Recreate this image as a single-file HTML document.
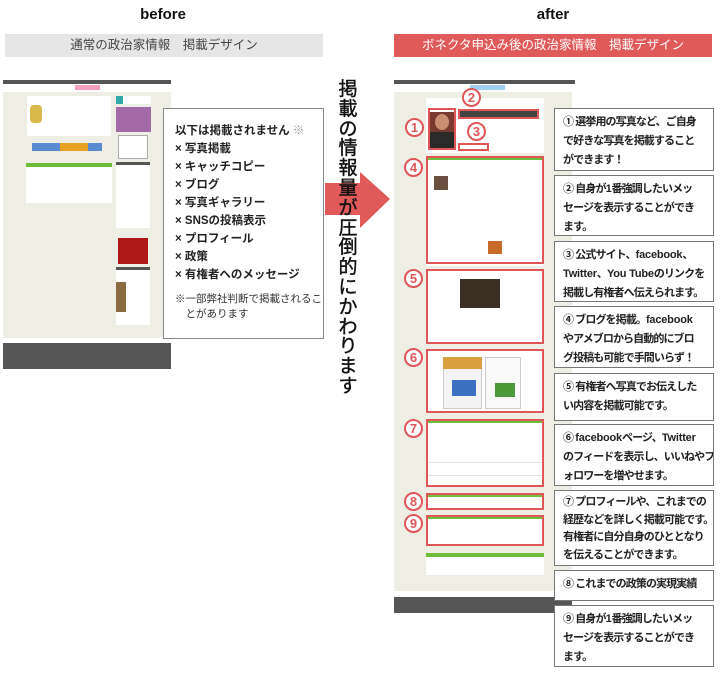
<!DOCTYPE html>
<html><head><meta charset="utf-8"><style>
*{margin:0;padding:0;box-sizing:border-box}
body{width:720px;height:673px;background:#fff;position:relative;overflow:hidden;font-family:"Liberation Sans","Noto Sans CJK JP",sans-serif;color:#222}
.a{position:absolute}
.hd{font-weight:bold;font-size:15px;text-align:center;color:#111}
.bar{height:23px;font-size:12.5px;line-height:23px;text-align:center}
.box{position:absolute;border:1.5px solid #777;background:#fff;font-size:11px;font-weight:bold;line-height:19px;padding:4px 0 0 8px;color:#222;white-space:nowrap;letter-spacing:-0.9px;overflow:hidden}
.box i{font-style:normal;letter-spacing:-0.2px}
.rb{position:absolute;border:2px solid #e05656}
.cn{position:absolute;width:19px;height:19px;border:2px solid #e05656;border-radius:50%;color:#e05656;font-size:13px;font-weight:bold;line-height:15px;text-align:center;background:#fff}
.g{position:absolute;background:#6bbf3a;height:4px}
.w{position:absolute;background:#fff}
.ln{position:absolute;height:1px;background:#e3e3e3}
</style></head><body>
<div class="a hd" style="left:100px;top:6px;width:126px">before</div>
<div class="a hd" style="left:490px;top:6px;width:126px">after</div>
<div class="a bar" style="left:5px;top:34px;width:318px;background:#e6e6e6;color:#444">通常の政治家情報　掲載デザイン</div>
<div class="a bar" style="left:394px;top:34px;width:318px;background:#e05a5a;color:#fff">ボネクタ申込み後の政治家情報　掲載デザイン</div>

<div class="a" style="left:3px;top:80px;width:168px;height:4px;background:#555"></div>
<div class="a" style="left:3px;top:92px;width:168px;height:246px;background:#eeeee4"></div>
<div class="a" style="left:75px;top:85px;width:25px;height:5px;background:#f3a0c0"></div>
<div class="w" style="left:27px;top:96px;width:84px;height:40px"></div>
<div class="a" style="left:30px;top:105px;width:12px;height:18px;background:#d9b94a;border-radius:4px"></div>
<div class="w" style="left:116px;top:96px;width:35px;height:8px"></div>
<div class="a" style="left:116px;top:96px;width:7px;height:8px;background:#3aa"></div>
<div class="a" style="left:116px;top:107px;width:35px;height:25px;background:#a46aa8"></div>
<div class="a" style="left:118px;top:135px;width:30px;height:24px;background:#fff;border:1px solid #aaa"></div>
<div class="a" style="left:32px;top:143px;width:70px;height:8px;background:#5a8ad0"></div>
<div class="a" style="left:60px;top:143px;width:18px;height:8px;background:#e8a020"></div>
<div class="a" style="left:78px;top:143px;width:10px;height:8px;background:#e8a020"></div>
<div class="w" style="left:26px;top:163px;width:86px;height:40px"></div>
<div class="g" style="left:26px;top:163px;width:86px"></div>
<div class="w" style="left:116px;top:162px;width:34px;height:66px"></div>
<div class="a" style="left:116px;top:162px;width:34px;height:3px;background:#555"></div>
<div class="a" style="left:118px;top:238px;width:30px;height:26px;background:#b01818"></div>
<div class="w" style="left:116px;top:267px;width:34px;height:58px"></div>
<div class="a" style="left:116px;top:267px;width:34px;height:3px;background:#555"></div>
<div class="a" style="left:116px;top:282px;width:10px;height:30px;background:#8a6a40"></div>
<div class="a" style="left:3px;top:343px;width:168px;height:26px;background:#555"></div>

<div class="a" style="left:163px;top:108px;width:161px;height:231px;border:1.5px solid #888;background:#fff"></div>
<div class="a" style="left:175px;top:122px;font-size:11.5px;font-weight:bold;line-height:18px;color:#222">以下は掲載されません <span style="color:#999;font-weight:normal">※</span><br>× 写真掲載<br>× キャッチコピー<br>× ブログ<br>× 写真ギャラリー<br>× SNSの投稿表示<br>× プロフィール<br>× 政策<br>× 有権者へのメッセージ</div>
<div class="a" style="left:175px;top:292px;font-size:10.5px;line-height:15px;color:#333">※一部弊社判断で掲載されるこ<br>　とがあります</div>

<svg class="a" style="left:320px;top:168px" width="75" height="64"><rect x="5" y="15" width="35" height="32" fill="#e05a5a"/><polygon points="40,4 70,31 40,60" fill="#e05a5a"/></svg>
<div class="a" style="left:337px;top:80px;width:22px;font-size:19px;line-height:19.8px;color:#111;text-align:center;-webkit-text-stroke:0.4px #111">掲載の情報量が圧倒的にかわります</div>

<div class="a" style="left:394px;top:80px;width:181px;height:4px;background:#555"></div>
<div class="a" style="left:394px;top:92px;width:178px;height:499px;background:#eeeee4"></div>
<div class="a" style="left:470px;top:85px;width:35px;height:5px;background:#a0d0f0"></div>
<div class="w" style="left:426px;top:98px;width:118px;height:55px"></div>
<div class="a" style="left:430px;top:112px;width:24px;height:36px;background:#7a3a30"></div>
<div class="a" style="left:435px;top:114px;width:14px;height:16px;background:#c89070;border-radius:50%"></div>
<div class="a" style="left:430px;top:132px;width:24px;height:16px;background:#2a2a2a"></div>
<div class="a" style="left:458px;top:110px;width:80px;height:8px;background:#444"></div>
<div class="w" style="left:426px;top:156px;width:118px;height:110px"></div>
<div class="g" style="left:426px;top:156px;width:118px"></div>
<div class="a" style="left:434px;top:176px;width:14px;height:14px;background:#6a5040"></div>
<div class="a" style="left:488px;top:241px;width:14px;height:13px;background:#c86a2a"></div>
<div class="w" style="left:426px;top:269px;width:118px;height:75px"></div>
<div class="a" style="left:460px;top:279px;width:40px;height:29px;background:#3a3024"></div>
<div class="w" style="left:426px;top:349px;width:118px;height:64px"></div>
<div class="a" style="left:443px;top:357px;width:39px;height:52px;background:#f4f4f4;border:1px solid #ccc"></div>
<div class="a" style="left:443px;top:357px;width:39px;height:12px;background:#d8a040"></div>
<div class="a" style="left:452px;top:380px;width:24px;height:16px;background:#3a70c0"></div>
<div class="a" style="left:485px;top:357px;width:36px;height:52px;background:#fafafa;border:1px solid #ccc"></div>
<div class="a" style="left:495px;top:383px;width:20px;height:14px;background:#4a9a3a"></div>
<div class="w" style="left:426px;top:419px;width:118px;height:68px"></div>
<div class="g" style="left:426px;top:419px;width:118px"></div>
<div class="ln" style="left:428px;top:462px;width:114px"></div>
<div class="ln" style="left:428px;top:475px;width:114px"></div>
<div class="w" style="left:426px;top:493px;width:118px;height:17px"></div>
<div class="g" style="left:426px;top:493px;width:118px"></div>
<div class="w" style="left:426px;top:515px;width:118px;height:31px"></div>
<div class="g" style="left:426px;top:515px;width:118px"></div>
<div class="w" style="left:426px;top:553px;width:118px;height:22px"></div>
<div class="g" style="left:426px;top:553px;width:118px"></div>
<div class="w" style="left:394px;top:591px;width:178px;height:6px"></div>
<div class="a" style="left:394px;top:597px;width:178px;height:16px;background:#555"></div>

<div class="rb" style="left:428px;top:108px;width:28px;height:42px"></div>
<div class="rb" style="left:458px;top:109px;width:81px;height:10px"></div>
<div class="rb" style="left:458px;top:143px;width:31px;height:8px"></div>
<div class="rb" style="left:426px;top:156px;width:118px;height:108px"></div>
<div class="rb" style="left:426px;top:269px;width:118px;height:75px"></div>
<div class="rb" style="left:426px;top:349px;width:118px;height:64px"></div>
<div class="rb" style="left:426px;top:419px;width:118px;height:68px"></div>
<div class="rb" style="left:426px;top:493px;width:118px;height:17px"></div>
<div class="rb" style="left:426px;top:515px;width:118px;height:31px"></div>

<div class="cn" style="left:405px;top:118px">1</div>
<div class="cn" style="left:462px;top:88px">2</div>
<div class="cn" style="left:467px;top:122px">3</div>
<div class="cn" style="left:404px;top:158px">4</div>
<div class="cn" style="left:404px;top:269px">5</div>
<div class="cn" style="left:404px;top:348px">6</div>
<div class="cn" style="left:404px;top:419px">7</div>
<div class="cn" style="left:404px;top:492px">8</div>
<div class="cn" style="left:404px;top:514px">9</div>

<div class="box" style="left:554px;top:108px;width:160px;height:63px">① 選挙用の写真など、ご自身<br>で好きな写真を掲載すること<br>ができます！</div>
<div class="box" style="left:554px;top:175px;width:160px;height:61px">② 自身が<i>1</i>番強調したいメッ<br>セージを表示することができ<br>ます。</div>
<div class="box" style="left:554px;top:241px;width:160px;height:61px">③ 公式サイト、<i>facebook</i>、<br><i>Twitter</i>、<i>You Tube</i>のリンクを<br>掲載し有権者へ伝えられます。</div>
<div class="box" style="left:554px;top:306px;width:160px;height:62px">④ ブログを掲載。<i>facebook</i><br>やアメブロから自動的にブロ<br>グ投稿も可能で手間いらず！</div>
<div class="box" style="left:554px;top:373px;width:160px;height:48px">⑤ 有権者へ写真でお伝えした<br>い内容を掲載可能です。</div>
<div class="box" style="left:554px;top:424px;width:160px;height:62px">⑥ <i>facebook</i>ページ、<i>Twitter</i><br>のフィードを表示し、いいねやフ<br>ォロワーを増やせます。</div>
<div class="box" style="left:554px;top:490px;width:160px;height:76px;line-height:17.5px;padding-top:3px">⑦ プロフィールや、これまでの<br>経歴などを詳しく掲載可能です。<br>有権者に自分自身のひととなり<br>を伝えることができます。</div>
<div class="box" style="left:554px;top:570px;width:160px;height:31px">⑧ これまでの政策の実現実績</div>
<div class="box" style="left:554px;top:605px;width:160px;height:62px">⑨ 自身が<i>1</i>番強調したいメッ<br>セージを表示することができ<br>ます。</div>
</body></html>
